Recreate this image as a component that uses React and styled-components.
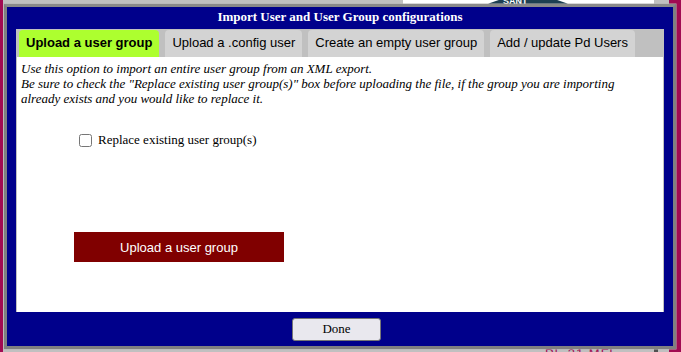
import React from 'react'
import styled, { createGlobalStyle } from 'styled-components'

const GlobalStyle = createGlobalStyle`
  html, body {
    margin: 0;
    padding: 0;
    background: #c0c0c0;
  }
  body {
    font-family: "Liberation Serif", "Times New Roman", serif;
  }
`

const tabs = [
  'Upload a user group',
  'Upload a .config user',
  'Create an empty user group',
  'Add / update Pd Users'
]

function SealLogo() {
  return (
    <svg width="251" height="40" viewBox="0 0 251 40">
      <rect width="251" height="40" fill="#ffffff" />
      <ellipse cx="125" cy="30" rx="62" ry="34" fill="#1d3f52" />
      <ellipse cx="125" cy="30" rx="48" ry="26" fill="#ffffff" />
      <text x="100" y="4" fill="#ffffff" fontSize="9" fontWeight="bold" fontFamily="Liberation Sans, sans-serif">
        SANT
      </text>
    </svg>
  )
}

export default function App() {
  return (
    <Page>
      <GlobalStyle />
      <Backdrop>
        <Rail $width="3px" />
        <BackMain>
          <BackHeader>
            <LogoBox>
              <SealLogo />
            </LogoBox>
          </BackHeader>
          <BackFooter>
            <BackLink>Pl. 31 MFl</BackLink>
            <ScrollThumb />
          </BackFooter>
        </BackMain>
        <Rail $width="12px" />
      </Backdrop>

      <Dialog>
        <DialogTitle>Import User and User Group configurations</DialogTitle>
        <Panel>
          <TabRow>
            {tabs.map((t, i) => (
              <Tab key={t} $active={i === 0}>
                {t}
              </Tab>
            ))}
          </TabRow>
          <TabBody>
            <Intro>
              Use this option to import an entire user group from an XML export.
              <br />
              Be sure to check the "Replace existing user group(s)" box before uploading the file, if the group you are importing
              <br />
              already exists and you would like to replace it.
            </Intro>
            <CheckRow>
              <Check type="checkbox" />
              Replace existing user group(s)
            </CheckRow>
            <UploadButton>Upload a user group</UploadButton>
          </TabBody>
        </Panel>
        <DialogFooter>
          <DoneButton>Done</DoneButton>
        </DialogFooter>
      </Dialog>
    </Page>
  )
}

const Page = styled.div`
  position: relative;
  width: 681px;
  height: 352px;
  overflow: hidden;
  background: #c0c0c0;
`

const Backdrop = styled.div`
  display: flex;
  height: 100%;
`

const Rail = styled.div`
  width: ${p => p.$width};
  flex-shrink: 0;
  background: #a10b52;
`

const BackMain = styled.div`
  flex: 1;
  display: flex;
  flex-direction: column;
  justify-content: space-between;
`

const BackHeader = styled.div`
  display: flex;
  padding-left: 400px;
`

const LogoBox = styled.div`
  height: 40px;
  overflow: hidden;
  border-bottom: 1px solid #555;
`

const BackFooter = styled.div`
  display: flex;
  align-items: flex-start;
  height: 6px;
  padding-left: 542px;
  overflow: hidden;
`

const BackLink = styled.span`
  font-family: "Liberation Sans", Arial, sans-serif;
  font-size: 13px;
  line-height: 13px;
  margin-top: 1px;
  color: #a10b52;
  letter-spacing: 1px;
`

const ScrollThumb = styled.div`
  width: 4px;
  height: 6px;
  margin-left: 40px;
  background: #505050;
`

const Dialog = styled.div`
  position: absolute;
  left: 4px;
  top: 4px;
  width: 672px;
  height: 345px;
  box-sizing: border-box;
  border: 3px solid #808080;
  border-top-color: #8a8a8a;
  box-shadow: 0 0 0 0.5px #b4b4b4;
  background: #00008b;
  display: flex;
  flex-direction: column;
`

const DialogTitle = styled.div`
  height: 22px;
  line-height: 19px;
  text-align: center;
  color: #ffffff;
  font-weight: bold;
  font-size: 13px;
`

const Panel = styled.div`
  margin: 0 9px;
  background: #c0c0c0;
  padding: 0 1px;
  display: flex;
  flex-direction: column;
`

const TabRow = styled.div`
  display: flex;
  gap: 6px;
  padding: 1px 1px 0 2px;
`

const Tab = styled.div`
  height: 27px;
  line-height: 26px;
  padding: 0 7px;
  border-radius: 4px 4px 0 0;
  font-family: "Liberation Sans", Arial, sans-serif;
  font-size: 13px;
  font-weight: ${p => (p.$active ? 'bold' : 'normal')};
  color: #000000;
  background: ${p => (p.$active ? '#adff2f' : '#d3d3d3')};
`

const TabBody = styled.div`
  height: 255px;
  background: #ffffff;
  padding: 4px 4px 0;
  box-sizing: border-box;
`

const Intro = styled.p`
  margin: 0;
  font-style: italic;
  font-size: 13px;
  line-height: 15px;
  color: #000000;
`

const CheckRow = styled.label`
  display: flex;
  align-items: center;
  gap: 6px;
  margin: 26px 0 0 58px;
  font-size: 13px;
  color: #000000;
`

const Check = styled.input`
  width: 13px;
  height: 13px;
  margin: 0;
`

const UploadButton = styled.button`
  display: block;
  width: 210px;
  height: 30px;
  margin: 84px 0 0 53px;
  border: none;
  background: #800000;
  color: #ffffff;
  font-family: "Liberation Sans", Arial, sans-serif;
  font-size: 13px;
`

const DialogFooter = styled.div`
  flex: 1;
  display: flex;
  align-items: center;
  justify-content: center;
`

const DoneButton = styled.button`
  width: 89px;
  height: 23px;
  margin-right: 7px;
  border: 1px solid #767676;
  border-radius: 3px;
  background: #e9e8ee;
  color: #000000;
  font-family: "Liberation Serif", "Times New Roman", serif;
  font-size: 13px;
  padding: 0;
`
